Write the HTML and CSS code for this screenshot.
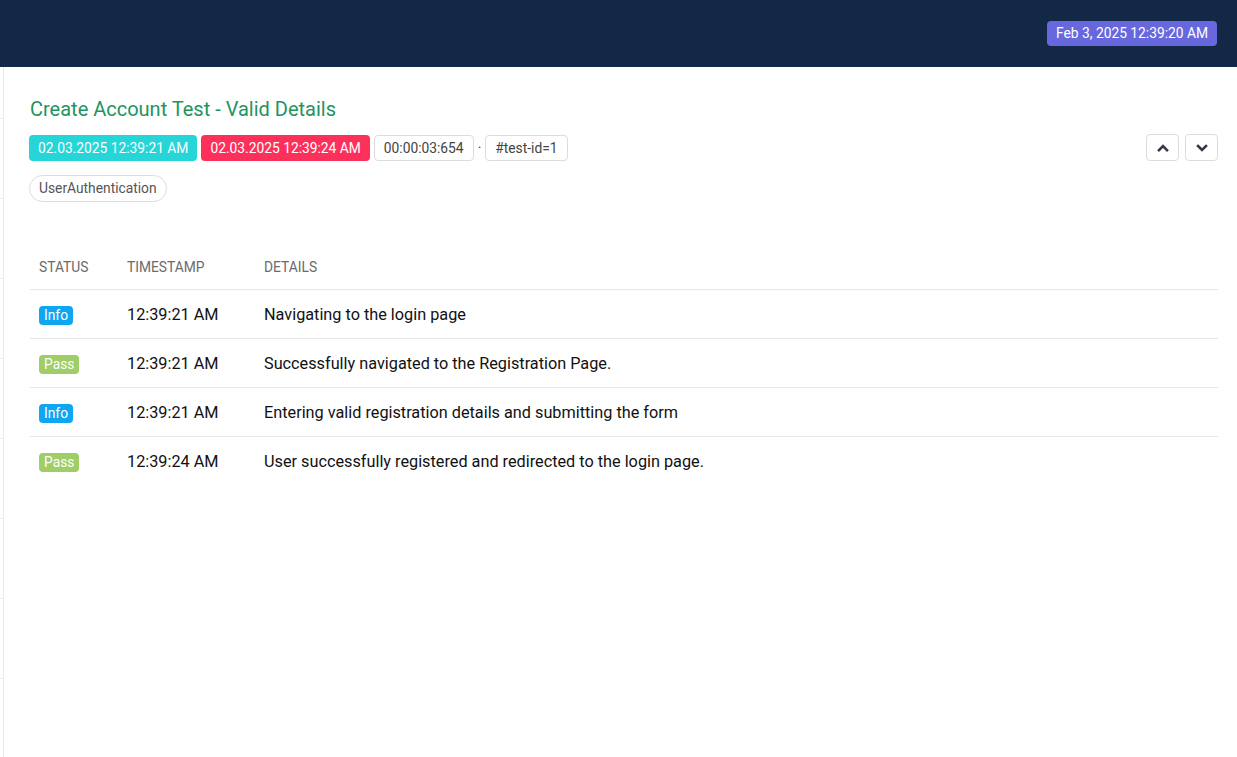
FILE: index.html
```html
<!DOCTYPE html>
<html>
<head>
<meta charset="utf-8">
<link rel="stylesheet" href="styles.css">
</head>
<body>
<header class="topbar">
  <span class="run-date">Feb 3, 2025 12:39:20 AM</span>
</header>
<div class="main">
  <aside class="test-list">
    <div class="tl-item first"></div>
    <div class="tl-item"></div>
    <div class="tl-item"></div>
    <div class="tl-item"></div>
    <div class="tl-item"></div>
    <div class="tl-item"></div>
    <div class="tl-item"></div>
    <div class="tl-item"></div>
  </aside>
  <section class="detail">
    <h5 class="test-title">Create Account Test - Valid Details</h5>
    <div class="meta-row">
      <div class="meta">
        <span class="badge start">02.03.2025 12:39:21 AM</span>
        <span class="badge end">02.03.2025 12:39:24 AM</span>
        <span class="badge outline">00:00:03:654</span>
        <span class="sep">&middot;</span>
        <span class="badge outline">#test-id=1</span>
      </div>
      <div class="nav">
        <button class="nav-btn"><svg width="12" height="12" viewBox="0 0 12 12"><path d="M2 8.2 L6 4.2 L10 8.2" fill="none" stroke="#333a45" stroke-width="2.6" stroke-linecap="square"/></svg></button>
        <button class="nav-btn"><svg width="12" height="12" viewBox="0 0 12 12"><path d="M2 4 L6 8 L10 4" fill="none" stroke="#333a45" stroke-width="2.6" stroke-linecap="square"/></svg></button>
      </div>
    </div>
    <div class="tags"><span class="tag">UserAuthentication</span></div>
    <table class="log">
      <thead>
        <tr><th class="c-status">Status</th><th class="c-time">Timestamp</th><th>Details</th></tr>
      </thead>
      <tbody>
        <tr><td><span class="st info">Info</span></td><td>12:39:21 AM</td><td>Navigating to the login page</td></tr>
        <tr><td><span class="st pass">Pass</span></td><td>12:39:21 AM</td><td>Successfully navigated to the Registration Page.</td></tr>
        <tr><td><span class="st info">Info</span></td><td>12:39:21 AM</td><td>Entering valid registration details and submitting the form</td></tr>
        <tr><td><span class="st pass">Pass</span></td><td>12:39:24 AM</td><td>User successfully registered and redirected to the login page.</td></tr>
      </tbody>
    </table>
  </section>
</div>
</body>
</html>
```
FILE: styles.css
```css
* { box-sizing: border-box; }
html, body { margin: 0; padding: 0; }
body {
  font-family: Roboto, "Liberation Sans", Arial, sans-serif;
  background: #fff;
  color: #111;
  height: 757px;
  overflow: hidden;
}
.topbar {
  height: 67px;
  background: #132746;
  display: flex;
  justify-content: flex-end;
  align-items: flex-start;
  padding: 21px 20px 0 0;
}
.run-date {
  background: #6767de;
  color: #fff;
  font-size: 13.8px;
  line-height: 25px;
  height: 25px;
  padding: 0 9px;
  border-radius: 4px;
}
.main {
  display: flex;
  height: 690px;
}
.test-list {
  width: 4px;
  flex: none;
  border-right: 1px solid #e8e8e8;
  background: #fff;
}
.tl-item {
  height: 80px;
  border-bottom: 1px solid #ececec;
}
.tl-item.first { height: 52px; }
.detail {
  flex: 1;
  padding: 30px 19px 0 26px;
}
.test-title {
  margin: 0;
  font-size: 20px;
  font-weight: 400;
  color: #22945e;
  line-height: 24px;
}
.meta-row {
  display: flex;
  justify-content: space-between;
  align-items: center;
  margin-top: 13px;
  margin-left: -1px;
}
.meta {
  display: flex;
  align-items: center;
  gap: 4px;
}
.badge {
  font-size: 13.8px;
  line-height: 26px;
  height: 26px;
  padding: 0 9px;
  border-radius: 4px;
  color: #fff;
}
.badge.start { background: #25d5d8; }
.badge.end { background: #fd305b; }
.badge.outline {
  color: #444;
  border: 1px solid #dcdcdc;
  line-height: 24px;
}
.sep { color: #444; font-size: 14px; padding: 0; }
.nav { display: flex; gap: 6px; }
.nav-btn {
  width: 33px;
  height: 27px;
  border: 1px solid #dcdcdc;
  border-radius: 4px;
  background: #fff;
  display: flex;
  align-items: center;
  justify-content: center;
  padding: 0;
}
.tags { margin-top: 14px; margin-left: -1px; }
.tag {
  display: inline-block;
  border: 1px solid #dcdcdc;
  border-radius: 14px;
  padding: 0 9px;
  height: 27px;
  line-height: 25px;
  font-size: 13.8px;
  color: #555;
}
.log {
  width: 100%;
  border-collapse: collapse;
  margin-top: 52px;
}
.log th {
  text-align: left;
  font-weight: 400;
  text-transform: uppercase;
  font-size: 13.8px;
  color: #6b6b6b;
  padding: 0 9px 9px;
  height: 35px;
  vertical-align: middle;
  border-bottom: 1px solid #e6e6e6;
}
.log th.c-status { width: 88px; }
.log th.c-time { width: 137px; }
.log td {
  height: 49px;
  padding: 2px 9px 0;
  font-size: 16.25px;
  color: #111;
  border-bottom: 1px solid #e6e6e6;
  vertical-align: middle;
}
.log tbody tr:last-child td { border-bottom: none; }
.st {
  display: inline-block;
  font-size: 13.8px;
  color: #fff;
  height: 19px;
  line-height: 19px;
  padding: 0 5px;
  border-radius: 4px;
  vertical-align: middle;
}
.st.info { background: #0ea5f1; }
.st.pass { background: #9fcd66; }
```
